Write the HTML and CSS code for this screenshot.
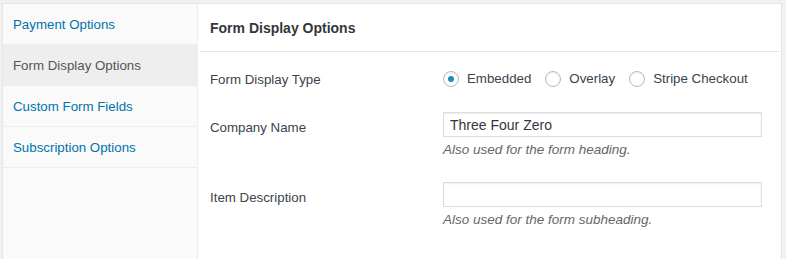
FILE: index.html
```html
<!DOCTYPE html>
<html lang="en">
<head>
<meta charset="UTF-8" />
<meta name="viewport" content="width=device-width, initial-scale=1" />
<title>Form Display Options</title>
<link rel="stylesheet" href="styles.css">
</head>
<body>
  <div class="panel">
    <ul class="tabs">
      <li><a href="#">Payment Options</a></li>
      <li class="active"><a href="#">Form Display Options</a></li>
      <li><a href="#">Custom Form Fields</a></li>
      <li><a href="#">Subscription Options</a></li>
    </ul>

    <div class="content">
      <h2 class="content-title">Form Display Options</h2>

      <div class="form-row row-radio">
        <div class="form-label">Form Display Type</div>
        <div class="form-field radios">
          <label class="radio"><input type="radio" name="display" checked> Embedded</label>
          <label class="radio"><input type="radio" name="display"> Overlay</label>
          <label class="radio"><input type="radio" name="display"> Stripe Checkout</label>
        </div>
      </div>

      <div class="form-row">
        <div class="form-label">Company Name</div>
        <div class="form-field">
          <input type="text" class="text-input" value="Three Four Zero">
          <p class="description">Also used for the form heading.</p>
        </div>
      </div>

      <div class="form-row">
        <div class="form-label">Item Description</div>
        <div class="form-field">
          <input type="text" class="text-input" value="">
          <p class="description">Also used for the form subheading.</p>
        </div>
      </div>
    </div>
  </div>
</body>
</html>
```

FILE: styles.css
```css
/* Dasar */
* {
  box-sizing: border-box;
}
html, body {
  height: 100%;
}
body {
  margin: 0;
  padding: 3px 4px 0 2px;
  background: #f1f1f1;
  font-family: 'Liberation Sans', Arial, sans-serif;
  font-size: 13.3px;
  color: #3c434a;
}
.panel {
  display: flex;
  height: 100%;
  background: #fff;
  border: 1px solid #e5e5e5;
  border-bottom: none;
}

/* Tab kiri */
.tabs {
  list-style: none;
  margin: 0;
  padding: 0;
  width: 195px;
  flex-shrink: 0;
  background: #fafafa;
  border-right: 1px solid #eee;
}
.tabs li {
  height: 41px;
  border-bottom: 1px solid #eee;
  display: flex;
  align-items: center;
  padding-left: 10px;
}
.tabs li a {
  color: #0073aa;
  text-decoration: none;
}
.tabs li.active {
  background: #eee;
}
.tabs li.active a {
  color: #555;
}

/* Konten */
.content {
  flex: 1;
  padding: 0 2px;
}
.content-title {
  margin: 0;
  height: 48px;
  padding: 0 0 0 10px;
  display: flex;
  align-items: center;
  font-size: 14px;
  font-weight: 700;
  color: #32373c;
  border-bottom: 1px solid #e5e5e5;
}
.form-row {
  display: grid;
  grid-template-columns: 233px 1fr;
  padding-left: 10px;
}
.row-radio {
  padding-top: 19px;
  padding-bottom: 25px;
  align-items: center;
}
.form-row + .form-row {
  margin-bottom: 23px;
}
.form-label {
  color: #3c434a;
}
.form-row:not(.row-radio) .form-label {
  padding-top: 8px;
}
.radios {
  display: flex;
  align-items: center;
  gap: 14px;
  line-height: 16px;
}
.radio {
  display: flex;
  align-items: center;
  gap: 8px;
}
.radio input {
  appearance: none;
  -webkit-appearance: none;
  margin: 0;
  width: 16px;
  height: 16px;
  border: 1px solid #b4b9be;
  border-radius: 50%;
  background: #fff;
  box-shadow: inset 0 1px 2px rgba(0,0,0,0.07);
  display: flex;
  align-items: center;
  justify-content: center;
}
.radio input:checked::before {
  content: "";
  width: 6px;
  height: 6px;
  border-radius: 50%;
  background: #1e8cbe;
}
.text-input {
  display: block;
  width: 319px;
  height: 25px;
  margin: 0;
  padding: 0 6px;
  border: 1px solid #ddd;
  box-shadow: inset 0 1px 2px rgba(0,0,0,0.07);
  font-family: inherit;
  font-size: 14px;
  color: #32373c;
  background: #fff;
}
.description {
  margin: 4px 0 0 0;
  font-style: italic;
  font-size: 13.5px;
  color: #666;
  line-height: 18px;
}
```
